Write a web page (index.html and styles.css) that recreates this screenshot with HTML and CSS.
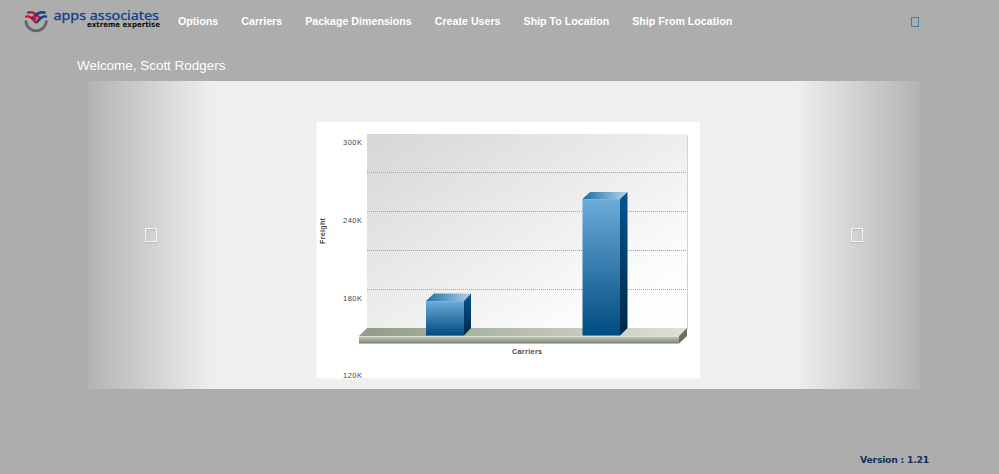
FILE: index.html
```html
<!DOCTYPE html>
<html lang="en">
<head>
<meta charset="utf-8">
<title>Apps Associates</title>
<link rel="stylesheet" href="styles.css">
</head>
<body>
<header class="topbar">
  <a class="brand" aria-label="apps associates">
    <svg class="logo" width="140" height="28" viewBox="0 0 140 28">
      <path d="M1.800 11.500A10.300 10.300 0 0 0 22.400 11.500" fill="none" stroke="#63656a" stroke-width="2.700"/>
      <g fill="none" stroke-width="2.400">
        <path d="M3 3.800C6.500 2.600 9 3 11.500 5L17 10" stroke="#d5162b"/>
        <path d="M1.200 7.800C5 6.500 7.500 8 12.200 14" stroke="#d5162b"/>
        <path d="M21.500 3.800C18 2.600 15.500 3 13 5L7.500 10" stroke="#123f8e"/>
        <path d="M23 7.800C19.500 6.500 17 8 12.200 14" stroke="#123f8e"/>
        <path d="M9 7L12.200 10.300" stroke="#d5162b"/>
      </g>
      <text class="logo-name" x="29.500" y="10.800" textLength="105.500" lengthAdjust="spacingAndGlyphs">apps associates</text>
      <text class="logo-tag" x="63" y="18.200" textLength="73" lengthAdjust="spacingAndGlyphs">extreme expertise</text>
    </svg>
  </a>
  <nav class="menu">
    <a>Options</a><a>Carriers</a><a>Package Dimensions</a><a>Create Users</a><a>Ship To Location</a><a>Ship From Location</a>
  </nav>
  <span class="missing power"></span>
</header>
<main class="content">
  <h1 class="welcome">Welcome, Scott Rodgers</h1>
  <section class="carousel">
    <div class="control left"><span class="missing arrow"></span></div>
    <svg class="chart" width="384" height="257" viewBox="0 0 384 257">
      <defs>
        <linearGradient id="wall" x1="0" y1="0" x2="1" y2="1"><stop offset="0" stop-color="#d6d6d6"/><stop offset=".8" stop-color="#fcfcfc"/><stop offset="1" stop-color="#fff"/></linearGradient>
        <linearGradient id="front" x1="0" y1="0" x2="0" y2="1"><stop offset="0" stop-color="#6bacda"/><stop offset="1" stop-color="#004b80"/></linearGradient>
        <linearGradient id="side" x1="0" y1="0" x2="0" y2="1"><stop offset="0" stop-color="#005790"/><stop offset="1" stop-color="#002747"/></linearGradient>
        <linearGradient id="cap" x1="0" y1="0" x2="1" y2="0"><stop offset="0" stop-color="#1b6fa8"/><stop offset="1" stop-color="#b4d2e8"/></linearGradient>
        <linearGradient id="floor" x1="0" y1="0" x2="1" y2="0"><stop offset="0" stop-color="#929b87"/><stop offset="1" stop-color="#dce2d6"/></linearGradient>
        <linearGradient id="edge" x1="0" y1="0" x2="0" y2="1"><stop offset="0" stop-color="#c4ccba"/><stop offset=".75" stop-color="#909986"/><stop offset="1" stop-color="#727b68"/></linearGradient>
      </defs>
      <rect x=".5" width="383.500" height="256.500" fill="#fff"/>
      <rect x="51" y="12" width="320" height="195" fill="url(#wall)"/>
      <path d="M371.500 13V207" stroke="#d2d2d2"/>
      <path d="M51 50.500H371M51 89.500H371M51 128.500H371M51 167.500H371" stroke="#a0a0a0" stroke-dasharray="1 1"/>
      <path d="M51 206H371L363 214H43Z" fill="url(#floor)"/>
      <path d="M43 214H363V221.500H43Z" fill="url(#edge)"/>
      <path d="M43 214.500H363" stroke="#dce2d5"/>
      <path d="M363 214L371 206V214L363 221.500Z" fill="#68705f"/>
      <g>
        <path d="M110 179L118 171.500H155L148 179Z" fill="url(#cap)"/>
        <path d="M148 179L155 171.500V206L148 213.500Z" fill="url(#side)"/>
        <rect x="110" y="179" width="38" height="34.500" fill="url(#front)"/>
        <path d="M110 179.500H148" stroke="#8bbbdc" stroke-opacity=".6"/>
      </g>
      <g>
        <path d="M266.500 77L274 70H311.500L304 77Z" fill="url(#cap)"/>
        <path d="M304 77L311.500 70V206L304 213.500Z" fill="url(#side)"/>
        <rect x="266.500" y="77" width="37.500" height="136.500" fill="url(#front)"/>
        <path d="M266.500 77.500H304" stroke="#8bbbdc" stroke-opacity=".6"/>
      </g>
      <g class="tick">
        <text x="27" y="23" textLength="19">300K</text>
        <text x="27" y="101" textLength="19">240K</text>
        <text x="27" y="178.500" textLength="19">180K</text>
        <text x="27" y="256" textLength="19">120K</text>
      </g>
      <text class="axis" x="196" y="232" textLength="30">Carriers</text>
      <text class="axis" transform="translate(9 122) rotate(-90)" textLength="26">Freight</text>
    </svg>
    <div class="control right"><span class="missing arrow"></span></div>
  </section>
</main>
<footer class="version">Version : 1.21</footer>
</body>
</html>
```
FILE: styles.css
```css
* { box-sizing: border-box; }
body {
  margin: 0;
  height: 474px;
  overflow: hidden;
  display: flex;
  flex-direction: column;
  background: #adadad;
  font-family: "Liberation Sans", Arial, sans-serif;
}
.topbar {
  height: 42px;
  display: flex;
  align-items: center;
  padding: 0 80px 0 24px;
}
.brand, .logo { display: block; }
.logo { margin-top: 4px; overflow: visible; }
.logo-name { font: 12.5px "Noto Sans", sans-serif; fill: #123f8e; stroke: #123f8e; stroke-width: .3px; }
.logo-tag { font: bold 7.5px "DejaVu Sans", sans-serif; fill: #111; }
.menu {
  display: flex;
  gap: 23px;
  margin-left: 14px;
  color: #fff;
  font-size: 10.67px;
  font-weight: bold;
  white-space: nowrap;
}
.missing { display: block; border: 1px solid; }
.power { width: 8px; height: 10px; margin: 2px 0 0 auto; color: #477da5; }
.content { padding: 0 79px 0 77px; }
.welcome {
  margin: 0;
  height: 39px;
  padding-top: 15px;
  color: #fff;
  font-size: 13.45px;
  font-weight: normal;
  line-height: 18px;
}
.carousel {
  height: 308px;
  margin-left: 11px;
  display: flex;
  background: #efefef;
}
.chart { margin: 41px auto 0 103px; flex: none; }
.tick { font-size: 7.5px; fill: #444; }
.axis { font-size: 7.1px; font-weight: bold; fill: #444; }
.control {
  width: 125px;
  display: flex;
  align-items: center;
}
.left { background: linear-gradient(to right, #b3b3b3, #efefef); padding-left: 57px; }
.right { background: linear-gradient(to left, #b3b3b3, #efefef); justify-content: flex-end; padding-right: 57px; }
.arrow {
  width: 12px;
  height: 14px;
  color: #f6f6f6;
  box-shadow: 0 1px 1px #bbb, inset 0 1px 1px #bbb;
}
.version {
  margin: auto 70px 7px auto;
  color: #14305a;
  font: bold 9.3px/14px "DejaVu Sans", Verdana, sans-serif;
  letter-spacing: -.25px;
}
```
